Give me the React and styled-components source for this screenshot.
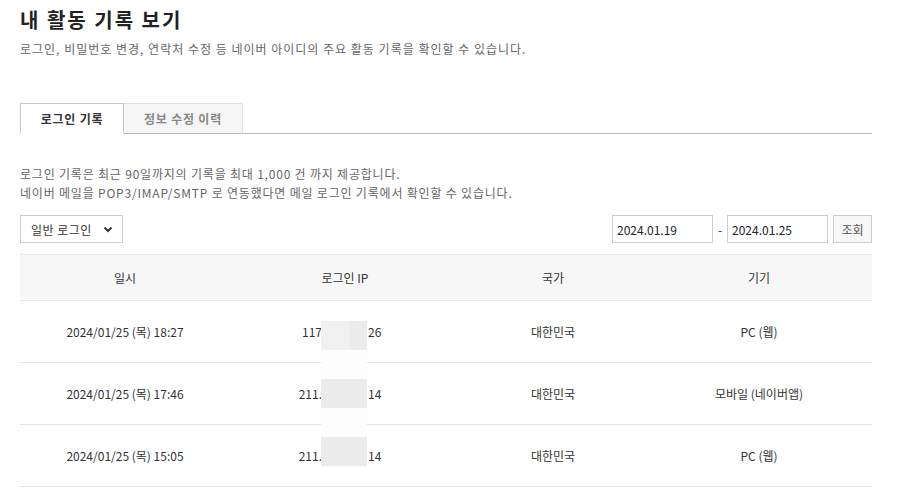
import React from 'react';
import styled, { createGlobalStyle } from 'styled-components';

const GlobalStyle = createGlobalStyle`
  body {
    margin: 0;
    background: #fff;
    font-family: "Noto Sans CJK KR", "Noto Sans", sans-serif;
    color: #333;
  }
`;

const Page = styled.div`
  width: 852px;
  padding: 8px 0 0 20px;
`;

const Title = styled.h2`
  margin: 0;
  font-size: 20px;
  line-height: 24px;
  font-weight: 700;
  color: #222;
  letter-spacing: 2px;
`;

const Lead = styled.p`
  margin: 9px 0 0;
  font-size: 12px;
  line-height: 16px;
  color: #666;
  letter-spacing: 1px;
`;

const Tabs = styled.div`
  display: flex;
  margin-top: 46px;
  border-bottom: 1px solid #bbb;
`;

const Tab = styled.div`
  width: ${(p) => p.$w}px;
  height: 31px;
  box-sizing: border-box;
  display: flex;
  align-items: center;
  justify-content: center;
  font-size: 12px;
  font-weight: 700;
  letter-spacing: 0.8px;
  margin-bottom: -1px;
  color: ${(p) => (p.$active ? '#333' : '#888')};
  background: ${(p) => (p.$active ? '#fff' : '#f5f5f5')};
  border: 1px solid ${(p) => (p.$active ? '#c8c8c8' : '#e0e0e0')};
  border-bottom: ${(p) => (p.$active ? '1px solid #fff' : '1px solid #bbb')};
  border-left: ${(p) => (p.$active ? '1px solid #c8c8c8' : 'none')};
`;

const Notice = styled.p`
  margin: 30px 0 0;
  font-size: 12px;
  line-height: 19px;
  color: #666;
  letter-spacing: 0.8px;
`;

const Controls = styled.div`
  display: flex;
  align-items: center;
  margin-top: 13px;
  height: 28px;
`;

const Select = styled.div`
  width: 103px;
  height: 28px;
  box-sizing: border-box;
  border: 1px solid #ccc;
  display: flex;
  align-items: center;
  justify-content: space-between;
  padding: 0 9px 0 10px;
  font-size: 12px;
  letter-spacing: 0.5px;
  color: #333;
`;

const DateGroup = styled.div`
  margin-left: auto;
  display: flex;
  align-items: center;
`;

const DateInput = styled.div`
  width: 101px;
  height: 28px;
  box-sizing: border-box;
  border: 1px solid #ccc;
  display: flex;
  align-items: center;
  padding-left: 4px;
  font-size: 12px;
  color: #222;
`;

const Dash = styled.span`
  width: 14px;
  text-align: center;
  font-size: 12px;
  color: #333;
`;

const Button = styled.div`
  margin-left: 5px;
  width: 39px;
  height: 28px;
  box-sizing: border-box;
  border: 1px solid #ccc;
  background: #f7f7f7;
  display: flex;
  align-items: center;
  justify-content: center;
  font-size: 12px;
  color: #555;
`;

const TableWrap = styled.div`
  position: relative;
  margin-top: 11px;
`;

const Row = styled.div`
  display: grid;
  grid-template-columns: 210px 230px 186px 226px;
  height: ${(p) => (p.$head ? 45 : 61)}px;
  background: ${(p) => (p.$head ? '#f7f7f7' : '#fff')};
  border-top: ${(p) => (p.$head ? '1px solid #e5e5e5' : 'none')};
  border-bottom: 1px solid #e3e3e3;
`;

const Cell = styled.div`
  display: flex;
  align-items: center;
  justify-content: center;
  font-size: 12px;
  color: #333;
  white-space: pre;
`;

const Gap = styled.span`
  display: inline-block;
  width: 46px;
`;

const IpSide = styled.span`
  width: 60px;
  text-align: ${(p) => p.$align};
`;

const Redaction = styled.div`
  position: absolute;
  left: 301px;
  top: 67px;
  width: 46px;
  display: flex;
  flex-direction: column;
`;

const Block = styled.div`
  height: 29px;
  background: ${(p) => p.$bg};
`;

const rows = [
  { date: '2024/01/25 (목) 18:27', ip: ['117', '26'], country: '대한민국', device: 'PC (웹)' },
  { date: '2024/01/25 (목) 17:46', ip: ['211.', '14'], country: '대한민국', device: '모바일 (네이버앱)' },
  { date: '2024/01/25 (목) 15:05', ip: ['211.', '14'], country: '대한민국', device: 'PC (웹)' },
];

const Chevron = () => (
  <svg width="10" height="7" viewBox="0 0 10 7">
    <polyline points="1.5,1.5 5,5 8.5,1.5" fill="none" stroke="#333" strokeWidth="2" />
  </svg>
);

export default function App() {
  return (
    <Page>
      <GlobalStyle />
      <Title>내 활동 기록 보기</Title>
      <Lead>로그인, 비밀번호 변경, 연락처 수정 등 네이버 아이디의 주요 활동 기록을 확인할 수 있습니다.</Lead>

      <Tabs>
        <Tab $w={104} $active>로그인 기록</Tab>
        <Tab $w={119}>정보 수정 이력</Tab>
      </Tabs>

      <Notice>
        로그인 기록은 최근 90일까지의 기록을 최대 1,000 건 까지 제공합니다.
        <br />
        네이버 메일을 POP3/IMAP/SMTP 로 연동했다면 메일 로그인 기록에서 확인할 수 있습니다.
      </Notice>

      <Controls>
        <Select>
          일반 로그인
          <Chevron />
        </Select>
        <DateGroup>
          <DateInput>2024.01.19</DateInput>
          <Dash>-</Dash>
          <DateInput>2024.01.25</DateInput>
          <Button>조회</Button>
        </DateGroup>
      </Controls>

      <TableWrap>
        <Row $head>
          <Cell>일시</Cell>
          <Cell>로그인 IP</Cell>
          <Cell>국가</Cell>
          <Cell>기기</Cell>
        </Row>
        {rows.map((r, i) => (
          <Row key={i}>
            <Cell>{r.date}</Cell>
            <Cell>
              <IpSide $align="right">{r.ip[0]}</IpSide>
              <Gap />
              <IpSide $align="left">{r.ip[1]}</IpSide>
            </Cell>
            <Cell>{r.country}</Cell>
            <Cell>{r.device}</Cell>
          </Row>
        ))}
        <Redaction>
          <Block $bg="linear-gradient(90deg, #f0f0f0 0 29px, #ebebeb 29px)" />
          <Block $bg="#fdfdfd" />
          <Block $bg="#ebebeb" />
          <Block $bg="#fdfdfd" />
          <Block $bg="#ebebeb" />
        </Redaction>
      </TableWrap>
    </Page>
  );
}
